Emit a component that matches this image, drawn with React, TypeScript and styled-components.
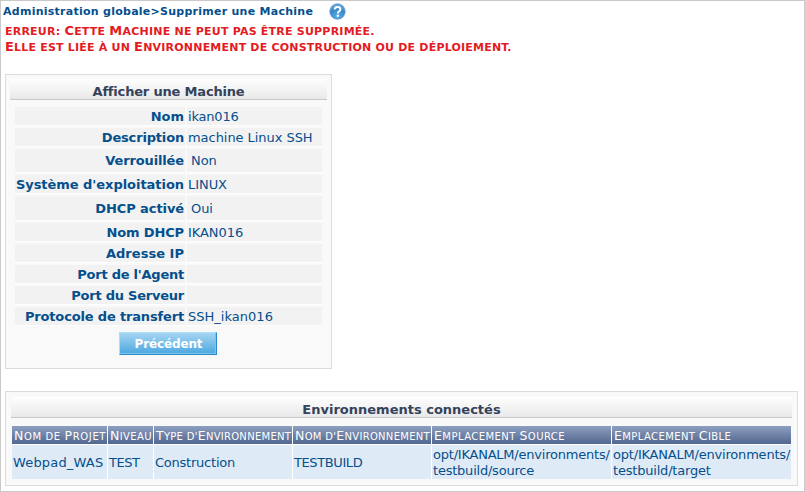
import React from "react";
import styled, { createGlobalStyle } from "styled-components";

const GlobalStyle = createGlobalStyle`
  *, *::before, *::after { box-sizing: border-box; }
  body {
    margin: 0;
    background: #fff;
    font-family: Verdana, "DejaVu Sans", sans-serif;
    font-size: 13px;
    color: #054f8c;
  }
`;

const Page = styled.div`
  width: 805px;
  height: 492px;
  padding-left: 4px;
  border: 1px solid #c9c9c9;
  overflow: hidden;
`;

const Breadcrumb = styled.h1`
  display: flex;
  align-items: center;
  gap: 15.5px;
  height: 21px;
  margin: 0 0 0 -2px;
  font-size: 11px;
  line-height: 21px;
  letter-spacing: 0.26px;
`;

const HelpIcon = styled.svg`
  width: 17px;
  height: 17px;
`;

const ErrorMessage = styled.div`
  height: 32px;
  margin-top: 1px;
  color: #e31b23;
  font-weight: bold;
  line-height: 16px;
  white-space: nowrap;
`;

const ErrorLine = styled.div<{ $spacing: number }>`
  height: 16px;
  letter-spacing: ${(p) => p.$spacing}px;
`;

const Small = styled.span<{ $size: number }>`
  font-size: ${(p) => p.$size}px;
  text-transform: uppercase;
  line-height: 1px;
`;

const Panel = styled.section<{ $wide?: boolean }>`
  width: ${(p) => (p.$wide ? 793 : 327)}px;
  height: ${(p) => (p.$wide ? 95 : 295)}px;
  margin-top: ${(p) => (p.$wide ? 22 : 19)}px;
  padding: ${(p) => (p.$wide ? "5px" : "4px")};
  border: 1px solid #dcdcdc;
  background: #f9f9f9;
`;

const PanelTitle = styled.h2<{ $spacing?: number }>`
  height: 21px;
  margin: 0;
  border-bottom: 1px solid #c8c8c8;
  background: linear-gradient(#fefefe, #e9e9eb);
  color: #34435a;
  font-size: 13px;
  line-height: 26px;
  letter-spacing: ${(p) => p.$spacing ?? 0}px;
  text-align: center;
`;

const Details = styled.dl`
  display: grid;
  grid-template-columns: 170px 135px;
  grid-template-rows: 21px 21px 26px 21px 27px 21px 21px 21px 21px 21px;
  column-gap: 2px;
  margin: 7px 0 0 5px;
`;

const Label = styled.dt<{ $spacing?: number }>`
  display: flex;
  align-items: center;
  justify-content: flex-end;
  margin-bottom: 2px;
  padding-right: 1px;
  border-bottom: 1px solid #fff;
  background: #f2f2f2;
  font-weight: bold;
  letter-spacing: ${(p) => p.$spacing ?? 0}px;
  white-space: nowrap;
`;

const Value = styled.dd<{ $indent?: boolean; $spacing?: number }>`
  display: flex;
  align-items: center;
  margin: 0 0 2px;
  padding-left: ${(p) => (p.$indent ? 4 : 1)}px;
  border-bottom: 1px solid #fff;
  background: #f2f2f2;
  letter-spacing: ${(p) => p.$spacing ?? -0.05}px;
  white-space: nowrap;
`;

const BackButton = styled.button`
  display: block;
  width: 98px;
  height: 23px;
  margin: 4px 0 0 109px;
  padding: 0 0 0 1px;
  border: 1px solid;
  border-color: #a8e0f5 #2a8bcb #2a8bcb #a8e0f5;
  background: linear-gradient(#a5d5f3, #4ba7de);
  box-shadow: inset -1px -1px #7cc4ec;
  color: #fff;
  font: bold 12px/20px Verdana, "DejaVu Sans", sans-serif;
  letter-spacing: -0.15px;
`;

const Table = styled.table`
  width: 779px;
  margin: 8px 0 0 1px;
  border-collapse: separate;
  border-spacing: 0;
  table-layout: fixed;
`;

const HeadCell = styled.th<{ $width: number; $spacing: number }>`
  width: ${(p) => p.$width}px;
  height: 19px;
  padding: 1px 0 0 2px;
  border-right: 1px solid #fff;
  border-bottom: 1px solid #fff;
  background: linear-gradient(#8d9fc0, #52678f);
  color: #fff;
  font-size: 12.5px;
  font-weight: normal;
  line-height: 17px;
  letter-spacing: ${(p) => p.$spacing}px;
  text-align: left;
  white-space: nowrap;
  &:last-child { border-right: 0; }
`;

const Cell = styled.td<{ $spacing?: number }>`
  height: 34px;
  padding: 1px 0 0 1px;
  border-right: 1px solid #fff;
  background: #deebf6;
  line-height: 16px;
  letter-spacing: ${(p) => p.$spacing ?? 0}px;
  white-space: nowrap;
  &:last-child { border-right: 0; }
`;

/** Sets lowercase runs as small capitals of a chosen size, beside full-size capitals. */
function SmallCaps({ text, size }: { text: string; size: number }) {
  return (
    <>
      {text.split(/(\p{Lu})/u).map((part, i) =>
        i % 2 ? part : part && <Small key={i} $size={size}>{part}</Small>,
      )}
    </>
  );
}

const details = [
  { label: "Nom", value: "ikan016", spacing: 0, valueSpacing: -0.2 },
  { label: "Description", value: "machine Linux SSH", spacing: -0.17 },
  { label: "Verrouillée", value: "Non", indent: true, spacing: -0.13 },
  { label: "Système d'exploitation", value: "LINUX", spacing: -0.04 },
  { label: "DHCP activé", value: "Oui", indent: true, spacing: -0.09 },
  { label: "Nom DHCP", value: "IKAN016", spacing: -0.13 },
  { label: "Adresse IP", value: "", spacing: 0.03 },
  { label: "Port de l'Agent", value: "", spacing: -0.24 },
  { label: "Port du Serveur", value: "", spacing: -0.23 },
  { label: "Protocole de transfert", value: "SSH_ikan016", spacing: -0.16, valueSpacing: 0.02 },
];

const columns = [
  { title: "Nom de Projet", width: 96, spacing: 0.62, cell: ["Webpad_WAS"], cellSpacing: 0.17 },
  { title: "Niveau", width: 46, spacing: 0.38, cell: ["TEST"], cellSpacing: -0.45 },
  { title: "Type d'Environnement", width: 139, spacing: 0.28, cell: ["Construction"], cellSpacing: -0.23 },
  { title: "Nom d'Environnement", width: 139, spacing: 0.3, cell: ["TESTBUILD"], cellSpacing: -0.4 },
  { title: "Emplacement Source", width: 180, spacing: 0.45, cell: ["opt/IKANALM/environments/", "testbuild/source"], cellSpacing: -0.22 },
  { title: "Emplacement Cible", width: 179, spacing: 0.4, cell: ["opt/IKANALM/environments/", "testbuild/target"], cellSpacing: -0.2 },
];

export default function App() {
  return (
    <>
      <GlobalStyle />
      <Page>
        <Breadcrumb>
          Administration globale&gt;Supprimer une Machine
          <HelpIcon viewBox="0 0 17 17" aria-label="Aide">
            <defs>
              <radialGradient id="help" cx="50%" cy="85%" r="85%">
                <stop offset="0" stopColor="#55b4ec" />
                <stop offset="0.6" stopColor="#3587cb" />
                <stop offset="1" stopColor="#6aaee0" />
              </radialGradient>
            </defs>
            <circle cx="8.5" cy="8.5" r="7.7" fill="url(#help)" stroke="#5a93c6" strokeWidth="0.8" />
            <path d="M5.7 6.5C5.8 4.7 7 4 8.5 4c1.7 0 2.9.9 2.9 2.3 0 2-2.5 2.1-2.5 3.8v.3" fill="none" stroke="#fff" strokeWidth="2" />
            <circle cx="8.8" cy="12.8" r="1.25" fill="#fff" />
          </HelpIcon>
        </Breadcrumb>
        <ErrorMessage>
          <ErrorLine $spacing={0.22}>
            <SmallCaps size={11} text="erreur: Cette Machine ne peut pas être supprimée." />
          </ErrorLine>
          <ErrorLine $spacing={0.2}>
            <SmallCaps size={11} text="Elle est liée à un Environnement de construction ou de déploiement." />
          </ErrorLine>
        </ErrorMessage>

        <Panel>
          <PanelTitle $spacing={-0.18}>Afficher une Machine</PanelTitle>
          <Details>
            {details.map((d) => (
              <React.Fragment key={d.label}>
                <Label $spacing={d.spacing}>{d.label}</Label>
                <Value $indent={d.indent} $spacing={d.valueSpacing}>{d.value}</Value>
              </React.Fragment>
            ))}
          </Details>
          <BackButton>Précédent</BackButton>
        </Panel>

        <Panel $wide>
          <PanelTitle>Environnements connectés</PanelTitle>
          <Table>
            <thead>
              <tr>
                {columns.map((c) => (
                  <HeadCell key={c.title} $width={c.width} $spacing={c.spacing}>
                    <SmallCaps size={10} text={c.title} />
                  </HeadCell>
                ))}
              </tr>
            </thead>
            <tbody>
              <tr>
                {columns.map((c) => (
                  <Cell key={c.title} $spacing={c.cellSpacing}>
                    {c.cell.map((line) => <div key={line}>{line}</div>)}
                  </Cell>
                ))}
              </tr>
            </tbody>
          </Table>
        </Panel>
      </Page>
    </>
  );
}
